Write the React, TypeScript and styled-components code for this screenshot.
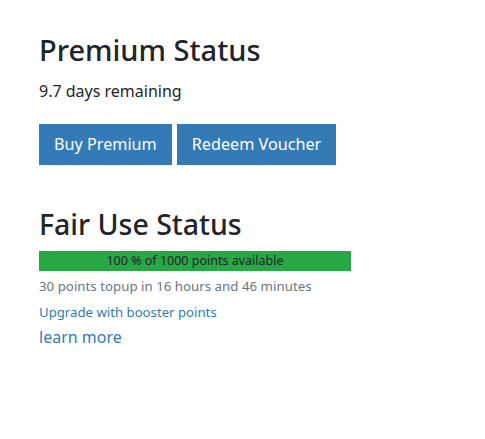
import React from "react";
import styled, { createGlobalStyle } from "styled-components";

const Global = createGlobalStyle`
  html, body { margin: 0; padding: 0; background: #fff; }
  body { font-family: "Noto Sans", "Open Sans", sans-serif; color: #212529; }
`;

const Page = styled.div`
  padding: 33px 39px;
  display: flex;
  flex-direction: column;
`;

const Section = styled.section<{ $gap?: number }>`
  display: flex;
  flex-direction: column;
  align-items: flex-start;
  margin-bottom: ${(p) => p.$gap ?? 0}px;
`;

const Heading = styled.h2<{ $size: number }>`
  margin: 0;
  font-size: ${(p) => p.$size}px;
  font-weight: 500;
  line-height: 1.2;
  color: #212529;
`;

const Remaining = styled.p`
  margin: 11px 0 0;
  font-size: 16px;
  line-height: 24px;
`;

const ButtonRow = styled.div`
  display: flex;
  gap: 5px;
  margin-top: 21px;
`;

const Button = styled.button`
  height: 41px;
  padding: 0 15px;
  border: none;
  border-radius: 0;
  background: #337ab7;
  color: #fff;
  font-family: inherit;
  font-size: 16.2px;
  cursor: pointer;
`;

const Bar = styled.div`
  margin-top: 10px;
  width: 312px;
  height: 20px;
  background: #e9ecef;
  display: flex;
`;

const BarFill = styled.div`
  background: #28a745;
  color: #212529;
  font-size: 12.5px;
  display: flex;
  align-items: center;
  justify-content: center;
  white-space: nowrap;
`;

const Muted = styled.div`
  margin-top: 5px;
  font-size: 13.3px;
  line-height: 20px;
  color: #6c757d;
`;

const SmallLink = styled.a`
  margin-top: 6px;
  font-size: 13.2px;
  line-height: 20px;
  color: #337ab7;
  text-decoration: none;
`;

const LearnMore = styled.a`
  margin-top: 4px;
  font-size: 16px;
  line-height: 22px;
  color: #337ab7;
  text-decoration: none;
`;

export default function App() {
  const pct = 100;
  return (
    <>
      <Global />
      <Page>
        <Section $gap={42}>
          <Heading $size={29}>Premium Status</Heading>
          <Remaining>9.7 days remaining</Remaining>
          <ButtonRow>
            <Button>Buy Premium</Button>
            <Button>Redeem Voucher</Button>
          </ButtonRow>
        </Section>
        <Section>
          <Heading $size={28.5}>Fair Use Status</Heading>
          <Bar>
            <BarFill style={{ width: `${pct}%` }}>100 % of 1000 points available</BarFill>
          </Bar>
          <Muted>30 points topup in 16 hours and 46 minutes</Muted>
          <SmallLink href="#">Upgrade with booster points</SmallLink>
          <LearnMore href="#">learn more</LearnMore>
        </Section>
      </Page>
    </>
  );
}
